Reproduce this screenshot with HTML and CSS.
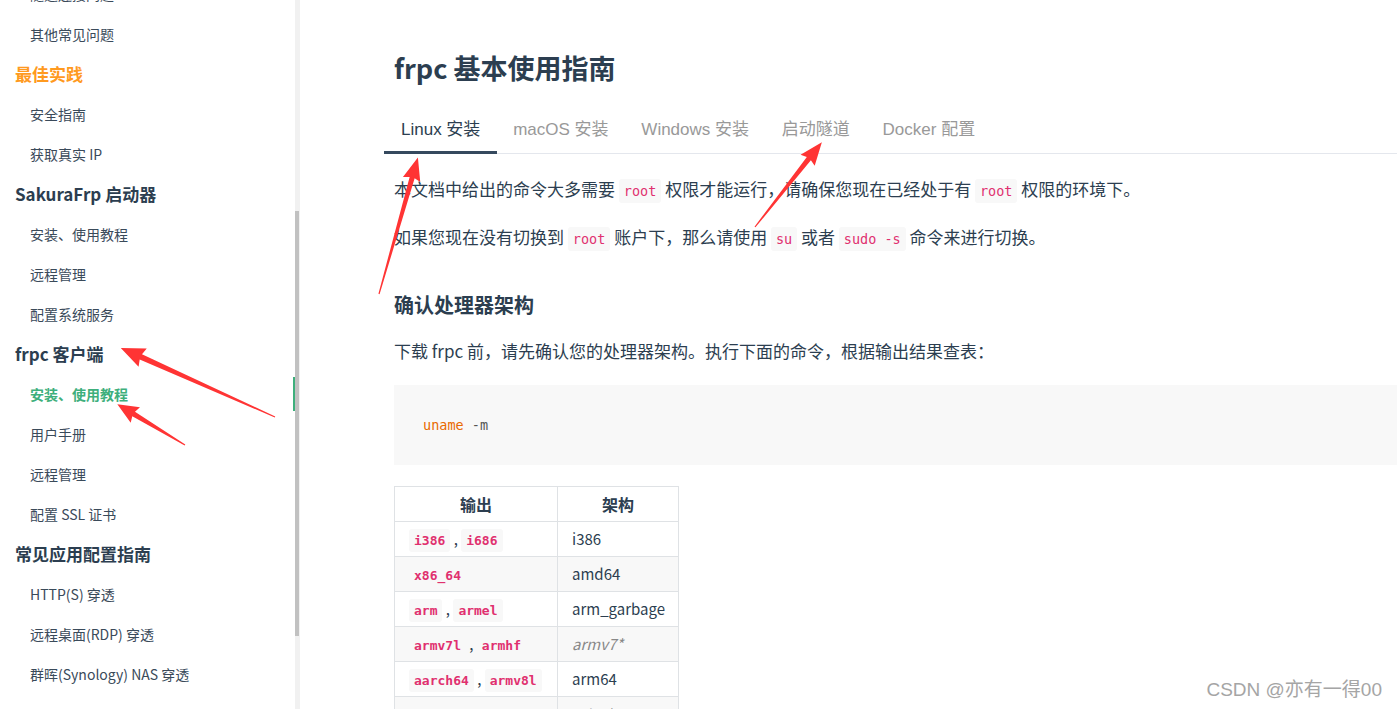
FILE: index.html
```html
<!DOCTYPE html>
<html lang="zh-CN">
<head>
    <meta charset="UTF-8">
    <meta name="viewport" content="width=device-width, initial-scale=1.0">
    <title>frpc 基本使用指南</title>
    <link rel="stylesheet" href="styles.css">
</head>
<body>
    <div class="page">
        <aside class="sidebar">
            <ul class="nav">
                <li><a class="link">隧道连接问题</a></li>
                <li><a class="link">其他常见问题</a></li>
                <li class="group group-hot">最佳实践</li>
                <li><a class="link">安全指南</a></li>
                <li><a class="link">获取真实 IP</a></li>
                <li class="group">SakuraFrp 启动器</li>
                <li><a class="link">安装、使用教程</a></li>
                <li><a class="link">远程管理</a></li>
                <li><a class="link">配置系统服务</a></li>
                <li class="group">frpc 客户端</li>
                <li><a class="link active">安装、使用教程</a></li>
                <li><a class="link">用户手册</a></li>
                <li><a class="link">远程管理</a></li>
                <li><a class="link">配置 SSL 证书</a></li>
                <li class="group">常见应用配置指南</li>
                <li><a class="link">HTTP(S) 穿透</a></li>
                <li><a class="link">远程桌面(RDP) 穿透</a></li>
                <li><a class="link">群晖(Synology) NAS 穿透</a></li>
            </ul>
            <div class="scroll-track"><div class="scroll-thumb"></div></div>
        </aside>

        <main class="main">
            <div class="content">
                <h1>frpc 基本使用指南</h1>

                <div class="tabs">
                    <div class="tab active">Linux 安装</div>
                    <div class="tab">macOS 安装</div>
                    <div class="tab">Windows 安装</div>
                    <div class="tab">启动隧道</div>
                    <div class="tab">Docker 配置</div>
                </div>

                <p>本文档中给出的命令大多需要 <code>root</code> 权限才能运行，请确保您现在已经处于有 <code>root</code> 权限的环境下。</p>
                <p>如果您现在没有切换到 <code>root</code> 账户下，那么请使用 <code>su</code> 或者 <code>sudo -s</code> 命令来进行切换。</p>

                <h3>确认处理器架构</h3>
                <p>下载 frpc 前，请先确认您的处理器架构。执行下面的命令，根据输出结果查表：</p>

                <pre class="code-block"><span class="tk-fn">uname</span> <span class="tk-arg">-m</span></pre>

                <table class="arch-table">
                    <thead>
                        <tr><th class="col-out">输出</th><th class="col-arch">架构</th></tr>
                    </thead>
                    <tbody>
                        <tr><td><code>i386</code> , <code>i686</code></td><td>i386</td></tr>
                        <tr><td><code>x86_64</code></td><td>amd64</td></tr>
                        <tr><td><code>arm</code> , <code>armel</code></td><td>arm_garbage</td></tr>
                        <tr><td><code>armv7l</code> , <code>armhf</code></td><td><em>armv7*</em></td></tr>
                        <tr><td><code>aarch64</code> , <code>armv8l</code></td><td>arm64</td></tr>
                        <tr><td><code>mips</code></td><td><em>mips*</em></td></tr>
                    </tbody>
                </table>
            </div>
        </main>
    </div>

    <svg class="marks" width="1397" height="709" viewBox="0 0 1397 709">
        <g fill="#ff3434">
            <polygon transform="translate(379 294) rotate(-74.1)" points="0,-0.6 121,-2.6 119,-9 142,0 119,9 121,2.6 0,0.6"/>
            <polygon transform="translate(755 227) rotate(-51.75)" points="0,-0.6 87,-2.6 85,-9 108,0 85,9 87,2.6 0,0.6"/>
            <polygon transform="translate(275 417) rotate(-155.87)" points="0,-0.6 147,-2.8 145,-10 169,0 145,10 147,2.8 0,0.6"/>
            <polygon transform="translate(185 445) rotate(-148.91)" points="0,-0.6 60,-2.6 58,-9 79,0 58,9 60,2.6 0,0.6"/>
        </g>
    </svg>

    <div class="watermark">CSDN @亦有一得00</div>
</body>
</html>
```

FILE: styles.css
```css
html, body {
    margin: 0;
    height: 709px;
    overflow: hidden;
}
body {
    font-family: "Noto Sans CJK SC", "Noto Sans", sans-serif;
    color: #2c3e50;
    background: #fff;
    position: relative;
}
.page {
    display: flex;
    height: 709px;
}

/* sidebar */
.sidebar {
    flex: none;
    width: 300px;
    height: 709px;
    display: flex;
    overflow: hidden;
}
.nav {
    list-style: none;
    margin: -26px 0 0;
    padding: 0;
    width: 295px;
}
.nav li {
    padding-top: 3px;
    padding-bottom: 3px;
}
.link {
    display: block;
    line-height: 34px;
    padding-left: 30px;
    font-size: 14px;
    color: #3a4a5a;
    border-right: 2px solid transparent;
}
.link.active {
    color: #3eaf7c;
    font-weight: bold;
    border-right-color: #3eaf7c;
}
.nav .group {
    line-height: 34px;
    padding-left: 15px;
    font-size: 17px;
    font-weight: bold;
    color: #2c3e50;
}
.nav .group-hot {
    color: #ff9a1f;
}
.scroll-track {
    width: 5px;
    background: #f1f1f1;
    padding-top: 211px;
}
.scroll-thumb {
    width: 4px;
    height: 425px;
    background: #c1c1c1;
}

/* main */
.main {
    flex: 1;
    padding: 50px 0 0 94px;
    overflow: hidden;
}
.content {
    width: 1100px;
}
h1 {
    margin: 0 0 24px;
    font-size: 27px;
    line-height: 35px;
    font-weight: bold;
}
.tabs {
    display: flex;
    margin-left: -10px;
    border-bottom: 1px solid #e4e7ed;
    font-family: "Liberation Sans", "Noto Sans CJK SC", sans-serif;
    font-size: 17px;
}
.tab {
    padding: 9px 16.4px;
    line-height: 24px;
    color: #999;
    border-bottom: 3px solid transparent;
    margin-bottom: -1px;
}
.tab.active {
    padding-left: 17px;
    color: #2c3e50;
    border-bottom-color: #35495e;
}
p {
    margin: 20px 0;
    font-size: 17px;
    line-height: 28px;
}
.tabs + p {
    margin-top: 21px;
}
code {
    font-family: "DejaVu Sans Mono", "Liberation Mono", monospace;
    font-size: 13.5px;
    line-height: 1;
    color: #e0306f;
    background: #f8f8f8;
    padding: 4px 5px;
    border-radius: 3px;
}
h3 {
    margin: 41px 0 19px;
    font-size: 20px;
    line-height: 25px;
    font-weight: bold;
}
.code-block {
    margin: 18px 0 21px;
    padding: 30px 29px;
    background: #f8f8f8;
    font-family: "DejaVu Sans Mono", "Liberation Mono", monospace;
    font-size: 13.5px;
    line-height: 20px;
}
.tk-fn {
    color: #e96900;
}
.tk-arg {
    color: #555;
}

/* table */
.arch-table {
    border-collapse: collapse;
    table-layout: fixed;
    width: 285px;
    font-size: 15px;
}
.arch-table th,
.arch-table td {
    border: 1px solid #dfe2e5;
    padding: 6px 14px;
    height: 22px;
    line-height: 22px;
    text-align: left;
    white-space: nowrap;
}
.arch-table th {
    text-align: center;
    font-size: 16px;
    font-weight: bold;
}
.col-out {
    width: 134px;
}
.arch-table tbody tr:nth-child(even) {
    background: #f8f8f8;
}
.arch-table td code {
    font-size: 13px;
    font-weight: bold;
}
.arch-table em {
    color: #888;
}

/* overlays */
.marks {
    position: absolute;
    top: 0;
    left: 0;
    pointer-events: none;
}
.watermark {
    position: absolute;
    right: 15px;
    bottom: 8px;
    font-family: "Liberation Sans", "Noto Sans CJK SC", sans-serif;
    font-size: 19px;
    color: #a5a5a5;
    text-shadow: 0 0 1px #fff;
}
```
